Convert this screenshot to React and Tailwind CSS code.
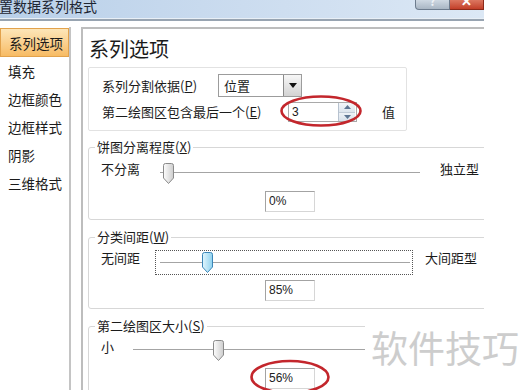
function Thumb({ blue, id }) {
  return (
    <svg width="11" height="21" viewBox="0 0 11 21">
      <defs>
        <linearGradient id={id} x1="0" x2="1" y1="0" y2="0">
          <stop offset="0" stopColor={blue ? '#e2f6fd' : '#fdfdfd'} />
          <stop offset="1" stopColor={blue ? '#8fd2ef' : '#cdcdcd'} />
        </linearGradient>
      </defs>
      <path
        d="M0.5 2.5 Q0.5 0.5 2.5 0.5 H8.5 Q10.5 0.5 10.5 2.5 V15 L5.5 20.5 L0.5 15 Z"
        fill={`url(#${id})`}
        stroke={blue ? '#3b86b8' : '#8a8a8a'}
      />
    </svg>
  )
}

function ValueBox({ value }) {
  return (
    <div className="w-[50px] h-[21px] border border-[#a3a3a3] border-r-[#d6d6d6] border-b-[#d6d6d6] bg-white pl-[3px] font-['Liberation_Sans',sans-serif] text-[12px] leading-[19px] text-[#222]">
      {value}
    </div>
  )
}

function Group({ label, hotkey, className, children }) {
  return (
    <fieldset className={`ml-[5px] w-[420px] border border-[#d7d7d7] rounded-[3px] pl-[12px] pb-[7px] ${className}`}>
      <legend className="-ml-[6px] px-[2px] leading-[16px]">
        {label}(<u>{hotkey}</u>)
      </legend>
      {children}
    </fieldset>
  )
}

export default function App() {
  const menu = ['填充', '边框颜色', '边框样式', '阴影', '三维格式']

  return (
    <div className="relative w-[523px] h-[390px] overflow-hidden bg-white font-['Noto_Sans_CJK_SC','Liberation_Sans',sans-serif] text-[13px] text-[#1b1b1b]">
      <div className="w-[484px] h-[390px] overflow-hidden flex flex-col">
        {/* Title bar */}
        <div className="h-[18px] shrink-0 flex bg-linear-to-r from-[#b9d0e9] via-[#cbdcef] to-[#dce8f5]">
          <div className="-ml-[15px] -mt-[2px] text-[14px] leading-[16px] text-[#1e2633] whitespace-nowrap">
            设置数据系列格式
          </div>
          <div className="ml-auto flex">
            <div className="w-[35px] h-[10px] overflow-hidden flex justify-center border border-t-0 border-[#6d7c8e] rounded-bl-[4px] bg-linear-to-b from-[#cfd9e3] to-[#a9b6c4]">
              <span className="-mt-[6px] text-[12px] leading-[14px] font-bold text-[#eef2f6]">?</span>
            </div>
            <div className="w-[34px] h-[10px] overflow-hidden flex justify-center border border-t-0 border-l-0 border-[#8c2a1a] bg-linear-to-b from-[#dc7761] to-[#c23e28]">
              <span className="-mt-[6px] text-[13px] leading-[14px] font-bold text-white">✕</span>
            </div>
          </div>
        </div>
        <div className="h-px shrink-0 bg-[#e8eff6]" />
        <div className="h-[2px] shrink-0 bg-[#98a4b1]" />

        {/* Body */}
        <div className="flex flex-1 pt-[6px]">
          {/* Sidebar */}
          <div className="w-[71px] shrink-0 border-r-2 border-[#c4c4c4] text-[13.5px]">
            <div className="mt-px h-[29px] flex items-center pl-[8px] border border-[#e2a24c] bg-linear-to-b from-[#fde6b8] to-[#f7bb63] leading-[16px]">
              系列选项
            </div>
            {menu.map((m) => (
              <div key={m} className="h-[28px] flex items-center pl-[8px] leading-[16px]">
                {m}
              </div>
            ))}
          </div>

          {/* Main panel */}
          <div className="ml-[10px] flex-1 border-l-2 border-t-2 border-[#bdbdbd] bg-white">
            <div className="pl-[6px] pt-[6px] text-[20px] leading-[28px]">系列选项</div>

            {/* Split settings */}
            <div className="mt-[4px] ml-[5px] w-[319px] h-[64px] border border-[#e2e2e2] rounded-[2px] pl-[13px] pt-[6px]">
              <div className="flex items-center h-[23px]">
                <div className="w-[116px] leading-[16px]">
                  系列分割依据(<u>P</u>)
                </div>
                <div className="w-[84px] h-[23px] flex border border-[#9c9c9c] bg-white">
                  <div className="flex-1 pl-[5px] leading-[21px]">位置</div>
                  <div className="w-[18px] flex items-center justify-center border-l border-[#8a8a8a] bg-linear-to-b from-[#f7f7f7] to-[#d3d3d3]">
                    <svg width="8" height="5" viewBox="0 0 8 5">
                      <path d="M0 0 H8 L4 5 Z" fill="#111" />
                    </svg>
                  </div>
                </div>
              </div>
              <div className="mt-[5px] flex items-center h-[20px]">
                <div className="w-[186px] leading-[16px]">
                  第二绘图区包含最后一个(<u>E</u>)
                </div>
                <div className="w-[69px] h-[20px] flex border border-[#a9a9a9] bg-white">
                  <div className="flex-1 pl-[3px] font-['Liberation_Sans',sans-serif] text-[12px] leading-[18px]">3</div>
                  <div className="w-[17px] mr-px flex flex-col border-l border-[#b7c2cf]">
                    <div className="flex-1 flex items-center justify-center bg-linear-to-b from-[#f3f6f9] to-[#dde5ee] border-b border-[#c2ccd8]">
                      <svg width="7" height="4" viewBox="0 0 7 4">
                        <path d="M0 4 H7 L3.5 0 Z" fill="#5d7592" />
                      </svg>
                    </div>
                    <div className="flex-1 flex items-center justify-center bg-linear-to-b from-[#eef2f7] to-[#d8e1eb]">
                      <svg width="7" height="4" viewBox="0 0 7 4">
                        <path d="M0 0 H7 L3.5 4 Z" fill="#5d7592" />
                      </svg>
                    </div>
                  </div>
                </div>
                <div className="ml-[25px] leading-[16px]">值</div>
              </div>
            </div>

            {/* Pie explosion */}
            <Group label="饼图分离程度" hotkey="X" className="mt-[8px]">
              <div className="mt-[6px] flex items-start h-[22px]">
                <div className="w-[57px] leading-[16px]">不分离</div>
                <div className="relative w-[267px] h-[22px]">
                  <div className="absolute left-[2px] top-[11px] w-[260px] h-px bg-[#a4a4a4]" />
                  <div className="absolute left-[5px] top-[2px]">
                    <Thumb id="t1" />
                  </div>
                </div>
                <div className="ml-[15px] leading-[16px]">独立型</div>
              </div>
              <div className="mt-[8px] ml-[164px]">
                <ValueBox value="0%" />
              </div>
            </Group>

            {/* Gap width */}
            <Group label="分类间距" hotkey="W" className="mt-[9px]">
              <div className="mt-[5px] flex items-start h-[25px]">
                <div className="w-[54px] leading-[16px]">无间距</div>
                <div className="relative w-[258px] h-[25px] border border-dotted border-[#555]">
                  <div className="absolute left-[4px] top-[11px] w-[250px] h-px bg-[#a4a4a4]" />
                  <div className="absolute left-[46px] top-[1px]">
                    <Thumb id="t2" blue />
                  </div>
                </div>
                <div className="ml-[12px] leading-[16px]">大间距型</div>
              </div>
              <div className="mt-[5px] ml-[164px]">
                <ValueBox value="85%" />
              </div>
            </Group>

            {/* Second plot size */}
            <Group label="第二绘图区大小" hotkey="S" className="mt-[9px]">
              <div className="mt-[5px] flex items-start h-[22px]">
                <div className="w-[29px] leading-[16px]">小</div>
                <div className="relative w-[295px] h-[22px]">
                  <div className="absolute left-[3px] top-[10px] w-[290px] h-px bg-[#a4a4a4]" />
                  <div className="absolute left-[83px] top-[1px]">
                    <Thumb id="t3" />
                  </div>
                </div>
              </div>
              <div className="mt-[7px] ml-[164px]">
                <ValueBox value="56%" />
              </div>
            </Group>
          </div>
        </div>
      </div>

      {/* Red annotation ellipses */}
      <svg className="absolute left-[279px] top-[94px]" width="86" height="35" viewBox="0 0 86 35">
        <ellipse cx="42" cy="17" rx="39.5" ry="14.5" fill="none" stroke="#c3262c" strokeWidth="2.6" />
      </svg>
      <svg className="absolute left-[249px] top-[358px]" width="84" height="40" viewBox="0 0 84 40">
        <ellipse cx="41" cy="19" rx="38.5" ry="16" fill="none" stroke="#c3262c" strokeWidth="2.6" />
      </svg>

      {/* Watermark */}
      <div className="absolute left-[365px] top-[312px] w-[158px] h-[78px] bg-white pl-[6px] pt-[15px] text-[37px] leading-[40px] text-[#cdcdcd] whitespace-nowrap">
        软件技巧
      </div>
    </div>
  )
}
